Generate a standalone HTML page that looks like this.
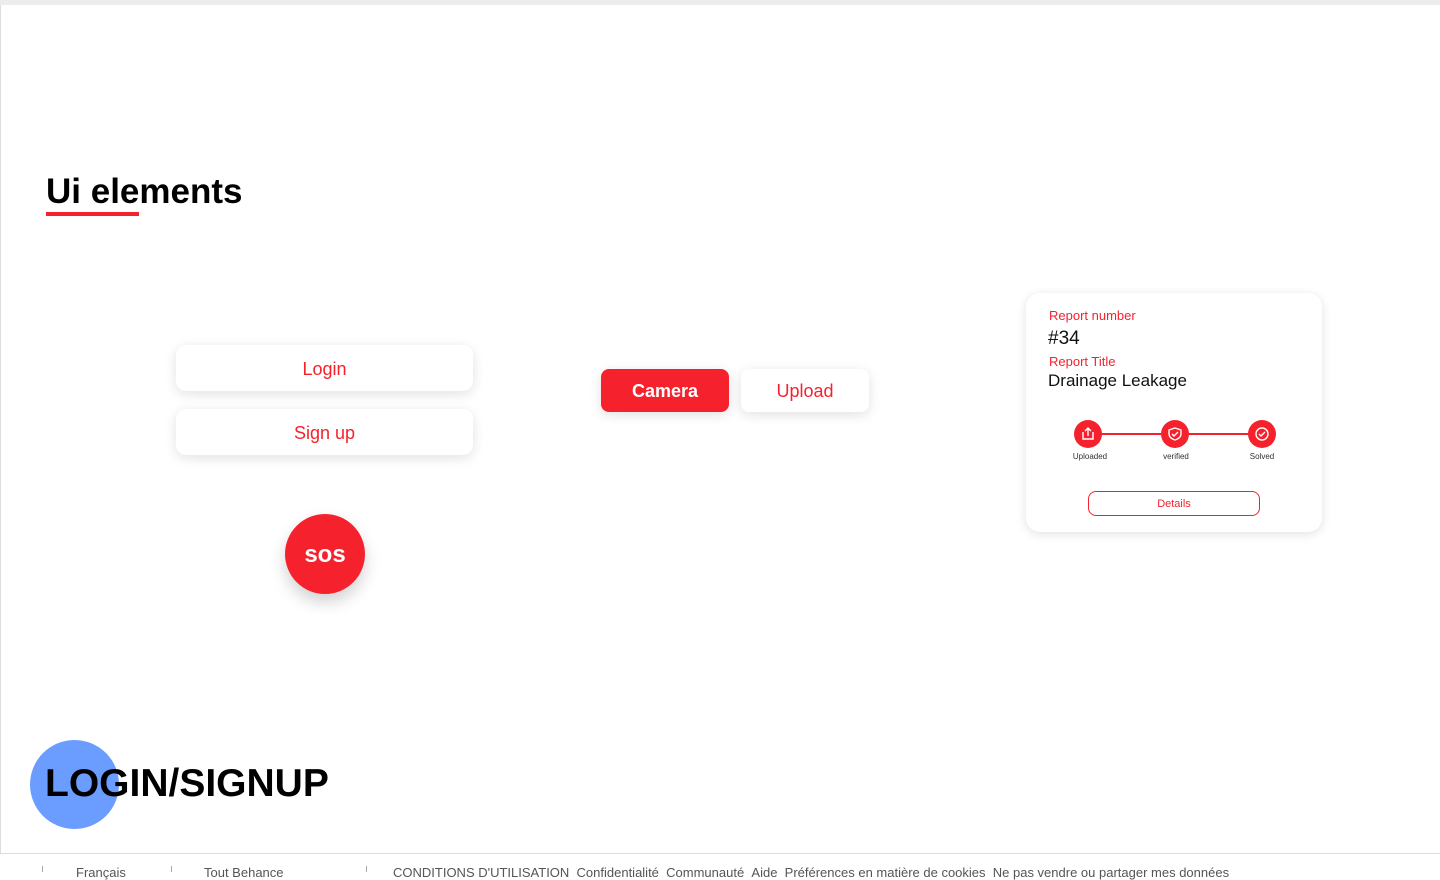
<!DOCTYPE html>
<html><head><style>
body{margin:0;width:1440px;height:872px;background:#fff;position:relative;overflow:hidden;font-family:"Liberation Sans",sans-serif}
.a{position:absolute}
.btn{position:absolute;background:#fff;border-radius:10px;box-shadow:0 3px 12px rgba(0,0,0,.12);color:#f5222d;font-size:18px;text-align:center}
.c{width:28px;height:28px;border-radius:50%;background:#f5222d;position:absolute;top:420px}
.lbl{position:absolute;top:452px;font-size:8px;color:#333;width:60px;text-align:center}
</style></head><body>
<div class="a" style="left:0;top:0;width:1440px;height:5px;background:#ececec"></div>
<div class="a" style="left:0;top:5px;width:1px;height:848px;background:#ddd"></div>
<div class="a" style="left:0;top:853px;width:1440px;height:1px;background:#ddd"></div>
<div class="a" style="left:46px;top:172px;font-size:35px;font-weight:bold;color:#000">Ui elements</div>
<div class="a" style="left:46px;top:212px;width:93px;height:4px;background:#f5222d"></div>
<div class="btn" style="left:176px;top:345px;width:297px;height:46px;line-height:48px">Login</div>
<div class="btn" style="left:176px;top:409px;width:297px;height:46px;line-height:48px">Sign up</div>
<div class="a" style="left:285px;top:514px;width:80px;height:80px;border-radius:50%;background:#f5222d;color:#fff;font-weight:bold;font-size:24px;text-align:center;line-height:82px;box-shadow:0 8px 16px rgba(0,0,0,.18)">sos</div>
<div class="btn" style="left:601px;top:369px;width:128px;height:43px;line-height:45px;background:#f5222d;color:#fff;font-weight:bold;border-radius:8px">Camera</div>
<div class="btn" style="left:741px;top:369px;width:128px;height:43px;line-height:45px;border-radius:8px">Upload</div>
<div class="a" style="left:1026px;top:293px;width:296px;height:239px;background:#fff;border-radius:14px;box-shadow:0 2px 10px rgba(0,0,0,.12)"></div>
<div class="a" style="left:1049px;top:308px;font-size:13px;color:#f5222d">Report number</div>
<div class="a" style="left:1048px;top:328px;font-size:19px;color:#111">#34</div>
<div class="a" style="left:1049px;top:354px;font-size:13px;color:#f5222d">Report Title</div>
<div class="a" style="left:1048px;top:371px;font-size:17px;color:#111">Drainage Leakage</div>
<div class="a" style="left:1090px;top:433px;width:172px;height:2px;background:#f5222d"></div>
<div class="c" style="left:1074px"></div><div class="c" style="left:1161px"></div><div class="c" style="left:1248px"></div>
<svg class="a" style="left:1074px;top:420px" width="202" height="28" fill="none" stroke="#fff" stroke-width="1.4">
<path d="M9 12v7h10v-7M14 16V8M11 11l3-3 3 3"/>
<path d="M101 8l6 2v4c0 3-3 5-6 6-3-1-6-3-6-6v-4zM98 14l2 2 4-4"/>
<circle cx="188" cy="14" r="6"/><path d="M185 14l2 2 4-4"/>
</svg>
<div class="lbl" style="left:1060px">Uploaded</div>
<div class="lbl" style="left:1146px">verified</div>
<div class="lbl" style="left:1232px">Solved</div>
<div class="a" style="left:1088px;top:491px;width:170px;height:23px;border:1px solid #f5222d;border-radius:8px;color:#f5222d;font-size:11px;text-align:center;line-height:25px">Details</div>
<div class="a" style="left:30px;top:740px;width:89px;height:89px;border-radius:50%;background:#6b9cff"></div>
<div class="a" style="left:45px;top:762px;font-size:39px;font-weight:bold;color:#000">LOGIN/SIGNUP</div>
<div class="a" style="left:42px;top:866px;width:1px;height:6px;background:#aaa"></div>
<div class="a" style="left:171px;top:866px;width:1px;height:6px;background:#aaa"></div>
<div class="a" style="left:366px;top:866px;width:1px;height:6px;background:#aaa"></div>
<div class="a" style="left:76px;top:865px;font-size:13px;color:#555;white-space:nowrap">Français</div>
<div class="a" style="left:204px;top:865px;font-size:13px;color:#555;white-space:nowrap">Tout Behance</div>
<div class="a" style="left:393px;top:865px;font-size:13px;color:#555;white-space:nowrap">CONDITIONS D'UTILISATION &nbsp;Confidentialité &nbsp;Communauté &nbsp;Aide &nbsp;Préférences en matière de cookies &nbsp;Ne pas vendre ou partager mes données</div>
</body></html>
